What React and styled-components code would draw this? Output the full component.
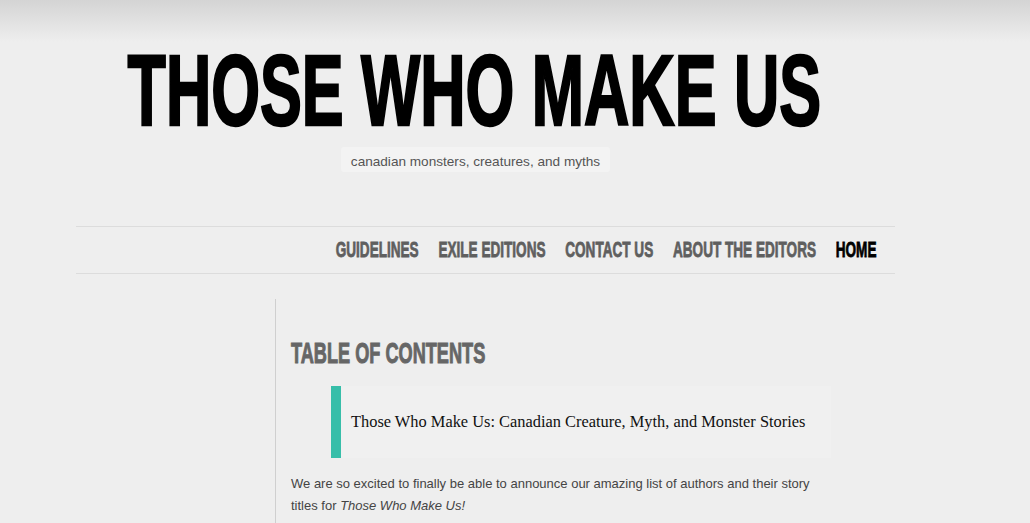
import React from 'react';
import styled, { createGlobalStyle, css } from 'styled-components';

const GlobalStyle = createGlobalStyle`
  html, body {
    margin: 0;
    padding: 0;
    background: #eeeeee;
    overflow-x: hidden;
  }
  body {
    font-family: "Liberation Sans", Arial, sans-serif;
  }
`;

// stand-in for a condensed display face: bold sans squeezed horizontally
const condensed = css`
  font-family: "Liberation Sans", Arial, sans-serif;
  font-weight: 700;
  text-transform: uppercase;
  white-space: nowrap;
  -webkit-text-stroke: ${(props) => props.$stroke || 0.8}px currentColor;
`;

const Page = styled.div`
  min-height: 523px;
  background: linear-gradient(#d4d4d4 0, #eeeeee 42px) no-repeat;
  overflow: hidden;
`;

const Wrap = styled.div`
  width: 819px;
  margin-left: 76px;
`;

const Header = styled.header`
  display: flex;
  flex-direction: column;
  align-items: center;
  padding-right: 22px;
  padding-top: 40px;
`;

const Title = styled.h1`
  margin: 0;
  width: 100%;
  display: flex;
  justify-content: center;
  font-size: 101px;
  line-height: 100px;
  color: #000;
`;

const Squeeze = styled.span`
  ${condensed};
  display: inline-block;
  flex-shrink: 0;
  transform: scaleX(${(props) => props.$scale});
  transform-origin: ${(props) => props.$origin || 'center'};
`;

const Tagline = styled.div`
  margin-top: 7px;
  padding: 0 10px;
  height: 25px;
  line-height: 29px;
  font-size: 13.6px;
  color: #555;
  background: #f3f3f3;
  border-radius: 3px;
  margin-left: 2px;
`;

const Nav = styled.nav`
  margin-top: 54px;
  border-top: 1px solid #dcdcdc;
  border-bottom: 1px solid #dcdcdc;
  height: 46px;
  display: flex;
  align-items: center;
  justify-content: flex-end;
  padding-right: 19px;
`;

const NavList = styled.ul`
  ${condensed};
  list-style: none;
  margin: 0;
  padding: 0;
  display: flex;
  flex-shrink: 0;
  gap: 32px;
  font-size: 22px;
  line-height: 24px;
  transform: scaleX(0.617);
  transform-origin: right center;
`;

const NavItem = styled.li`
  color: ${(props) => (props.$active ? '#000' : '#5f5f5f')};
`;

const Body = styled.div`
  display: grid;
  grid-template-columns: 199px 556px;
  margin-top: 25px;
`;

const Sidebar = styled.aside``;

const Content = styled.main`
  border-left: 1px solid #cfcfcf;
  padding-left: 15px;
  min-height: 240px;
`;

const Heading = styled.h2`
  margin: 37px 0 0;
  font-size: 30px;
  line-height: 33px;
  color: #666;
`;

const Quote = styled.blockquote`
  margin: 17px 0 0 40px;
  width: 500px;
  box-sizing: border-box;
  border-left: 10px solid #37bea9;
  background: #f0f0f0;
  padding: 24px 10px;
  font-family: "Liberation Serif", "DejaVu Serif", serif;
  font-size: 16.4px;
  line-height: 24px;
  white-space: nowrap;
  color: #111;
`;

const Text = styled.p`
  margin: 15px 0 0;
  width: 540px;
  font-size: 13px;
  line-height: 22px;
  color: #444;
`;

const navItems = ['Guidelines', 'Exile Editions', 'Contact Us', 'About the Editors', 'Home'];

export default function App() {
  return (
    <Page>
      <GlobalStyle />
      <Wrap>
        <Header>
          <Title>
            <Squeeze $scale={0.621} $stroke={2.5}>Those Who Make Us</Squeeze>
          </Title>
          <Tagline>canadian monsters, creatures, and myths</Tagline>
        </Header>
        <Nav>
          <NavList>
            {navItems.map((item) => (
              <NavItem key={item} $active={item === 'Home'}>{item}</NavItem>
            ))}
          </NavList>
        </Nav>
        <Body>
          <Sidebar />
          <Content>
            <Heading>
              <Squeeze $scale={0.605} $stroke={1} $origin="left center">Table of Contents</Squeeze>
            </Heading>
            <Quote>Those Who Make Us: Canadian Creature, Myth, and Monster Stories</Quote>
            <Text>
              We are so excited to finally be able to announce our amazing list of authors and their story
              titles for <em>Those Who Make Us!</em>
            </Text>
          </Content>
        </Body>
      </Wrap>
    </Page>
  );
}
